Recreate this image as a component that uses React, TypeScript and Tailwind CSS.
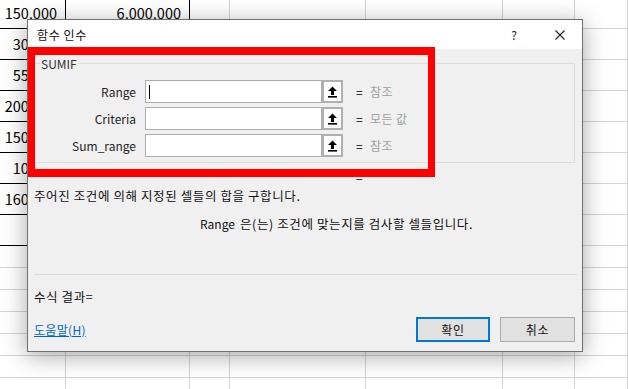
import React from "react"

const cols = [
  "w-[66px]",
  "w-[124px]",
  "w-[40px]",
  "w-[136px]",
  "w-[137px]",
  "w-[72px]",
  "flex-1",
]

const tallRows = [
  ["150,000", "6,000,000"],
  ["30,000", ""],
  ["55,000", ""],
  ["200,000", ""],
  ["150,000", ""],
  ["10,000", ""],
  ["160,000", ""],
  ["", ""],
]

function Sheet() {
  return (
    <div className="mt-[-2px] flex flex-col">
      {tallRows.map((r, i) => (
        <div key={i} className="flex h-[31px]">
          {cols.map((w, j) => (
            <div
              key={j}
              className={
                j < 2
                  ? `${w} flex items-center justify-end border-r border-b border-black pr-[8px]`
                  : `${w} border-r border-b border-[#d4d4d4]`
              }
            >
              {j < 2 ? r[j] : null}
            </div>
          ))}
        </div>
      ))}
      {[0, 1, 2, 3, 4, 5, 6].map((i) => (
        <div key={i} className="flex h-[22px]">
          {cols.map((w, j) => (
            <div key={j} className={`${w} border-r border-b border-[#d4d4d4]`} />
          ))}
        </div>
      ))}
    </div>
  )
}

function RefButton() {
  return (
    <div className="flex h-[23px] w-[21px] items-center justify-center border-2 border-[#b0b0b0] bg-[#fdfdfd]">
      <svg width="11" height="12" viewBox="0 0 11 12">
        <path d="M5.5 0.5 L10 5 H7 V9 H4 V5 H1 Z" fill="#000" />
        <rect x="1" y="10" width="9" height="1.6" fill="#000" />
      </svg>
    </div>
  )
}

function ArgRow({ label, value, cursor }: { label: string; value: string; cursor?: boolean }) {
  return (
    <div className="flex h-[23px] items-center">
      <div className="w-[102px] text-right text-[#1e1e1e]">{label}</div>
      <div className="ml-[9px] flex h-[23px] w-[177px] items-center border border-[#adadad] bg-white pl-[3px]">
        {cursor && <div className="h-[14px] w-px bg-black" />}
      </div>
      <RefButton />
      <div className="ml-[13px] w-[14px] text-black">=</div>
      <div className="tracking-[0.4px] text-[#a0a0a0]">{value}</div>
    </div>
  )
}

export default function App() {
  return (
    <div className="relative h-[389px] w-[628px] overflow-hidden bg-white font-['Noto_Sans_CJK_KR',sans-serif] text-[14.5px] text-black">
      <Sheet />

      <div className="absolute left-[27px] top-[19px] flex h-[333px] w-[556px] flex-col border border-[#707070] bg-white text-[12px] shadow-[0_4px_22px_rgba(0,0,0,0.35)]">
        <div className="flex h-[29px] items-center bg-white pl-[9px]">
          <span className="tracking-[0.6px] text-[#111]">함수 인수</span>
          <span className="ml-auto text-[12px] text-[#222]">?</span>
          <svg className="ml-[38px] mr-[17px]" width="10" height="10" viewBox="0 0 10 10">
            <path d="M0.5 0.5 L9.5 9.5 M9.5 0.5 L0.5 9.5" stroke="#222" strokeWidth="1.1" />
          </svg>
        </div>

        <div className="flex flex-1 flex-col bg-[#f0f0f0] pl-[5px] pr-[7px] pt-[14px]">
          <div className="flex h-[100px] flex-col border border-[#dcdcdc]">
            <div className="ml-[6px] mt-[-7px] w-fit bg-[#f0f0f0] px-px leading-[14px] text-[#333]">SUMIF</div>
            <div className="mt-[9px] flex flex-col gap-[4px]">
              <ArgRow label="Range" value="참조" cursor />
              <ArgRow label="Criteria" value="모든 값" />
              <ArgRow label="Sum_range" value="참조" />
            </div>
          </div>

          <div className="h-[25px] pl-[323px] pt-[6px] leading-[16px]">=</div>

          <div className="pl-[1px] text-[12.5px] leading-[16px] tracking-[0.6px] text-[#111]">
            주어진 조건에 의해 지정된 셀들의 합을 구합니다.
          </div>

          <div className="mt-[12px] flex pl-[167px] leading-[16px] text-[#111]">
            <span className="w-[40px]">Range</span>
            <span className="text-[12.5px] tracking-[0.6px]">은(는) 조건에 맞는지를 검사할 셀들입니다.</span>
          </div>

          <div className="ml-[1px] mr-[-2px] mt-[42px] h-px bg-[#dcdcdc]" />

          <div className="mt-[14px] pl-[1px] text-[12.5px] leading-[16px] tracking-[0.6px] text-[#111]">수식 결과=</div>

          <div className="mt-[12px] flex items-center">
            <span className="pl-[1px] tracking-[0.3px] text-[#0066cc] underline">도움말(H)</span>
            <div className="ml-auto flex gap-[10px]">
              <div className="flex h-[25px] w-[74px] items-center justify-center border-2 border-[#0078d7] bg-[#e1e1e1] tracking-[0.6px] text-[#111]">확인</div>
              <div className="flex h-[25px] w-[75px] items-center justify-center border border-[#adadad] bg-[#e1e1e1] tracking-[0.6px] text-[#111]">취소</div>
            </div>
          </div>
        </div>

        <div className="absolute left-0 top-[27px] h-[130px] w-[407px] border-x-[7px] border-y-[8px] border-[#ff0000]" />
      </div>
    </div>
  )
}
